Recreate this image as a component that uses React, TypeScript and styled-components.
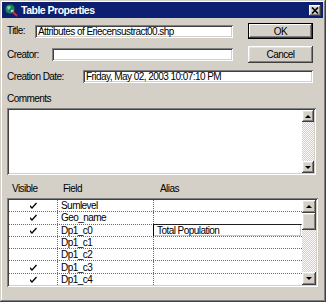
import styled, { createGlobalStyle } from "styled-components";

const GlobalStyle = createGlobalStyle`
  html, body {
    margin: 0;
    padding: 0;
    background: #d4d0c8;
  }
  body {
    font-family: "Liberation Sans", Arial, sans-serif;
    font-size: 10px;
    letter-spacing: -0.55px;
    color: #000;
  }
`;

const raised = `
  box-shadow: inset -1px -1px #404040, inset 1px 1px #ffffff,
    inset -2px -2px #808080, inset 2px 2px #e4e1da;
`;

const sunken = `
  box-shadow: inset 1px 1px #808080, inset -1px -1px #ffffff,
    inset 2px 2px #404040, inset -2px -2px #d4d0c8;
`;

const Window = styled.div`
  width: 326px;
  height: 302px;
  box-sizing: border-box;
  background: #d4d0c8;
  padding: 2px 3px 2px 2px;
  display: flex;
  flex-direction: column;
  box-shadow: inset -1px -1px #404040, inset 1px 1px #d4d0c8,
    inset -2px -2px #808080, inset 2px 2px #ffffff;
`;

const TitleBar = styled.div`
  height: 16px;
  background: #0c1f70;
  display: flex;
  align-items: center;
  padding: 0 2px;
  gap: 3px;
`;

const TitleText = styled.span`
  flex: 1;
  color: #fff;
  font-weight: bold;
  font-size: 10.5px;
  letter-spacing: -0.5px;
  line-height: 16px;
`;

const CloseButton = styled.div`
  width: 12px;
  height: 11px;
  background: #d4d0c8;
  display: flex;
  align-items: center;
  justify-content: center;
  ${raised}
`;

const Body = styled.div`
  flex: 1;
  display: flex;
  flex-direction: column;
  padding: 5px 5px 0 5px;
`;

const TopGrid = styled.div`
  display: grid;
  grid-template-columns: 1fr 65px;
  grid-template-rows: 16px 17px 13px;
  column-gap: 15px;
  row-gap: 7px;
  margin-right: 5px;
`;

const FieldRow = styled.div<{ $span?: boolean }>`
  display: flex;
  align-items: center;
  grid-column: ${(p) => (p.$span ? "1 / 3" : "auto")};
`;

const Label = styled.label<{ $w?: number }>`
  width: ${(p) => (p.$w ? `${p.$w}px` : "auto")};
  flex-shrink: 0;
  line-height: 12px;
`;

const Input = styled.div`
  flex: 1;
  height: 13px;
  background: #fff;
  padding-left: 3px;
  line-height: 13px;
  white-space: nowrap;
  overflow: hidden;
  ${sunken}
`;

const Button = styled.div<{ $default?: boolean }>`
  display: flex;
  align-items: center;
  justify-content: center;
  background: #d4d0c8;
  box-shadow: ${(p) =>
    p.$default
      ? "inset 0 0 0 1px #000, inset -2px -2px #404040, inset 2px 2px #fff, inset -3px -3px #808080"
      : "inset -1px -1px #404040, inset 1px 1px #fff, inset -2px -2px #808080, inset 2px 2px #e4e1da"};
`;

const SectionLabel = styled.div`
  height: 12px;
  line-height: 12px;
  margin-top: 10px;
`;

const CommentsBox = styled.div`
  height: 67px;
  margin-top: 3px;
  margin-right: 2px;
  background: #fff;
  padding: 2px;
  box-sizing: border-box;
  display: flex;
  justify-content: flex-end;
  ${sunken}
`;

const ScrollBar = styled.div<{ $w: number }>`
  width: ${(p) => p.$w}px;
  display: flex;
  flex-direction: column;
  background-color: #eeece8;
  background-image: repeating-conic-gradient(#d4d0c8 0 25%, #fbfaf8 0 50%);
  background-size: 2px 2px;
`;

const ScrollButton = styled.div<{ $h: number }>`
  height: ${(p) => p.$h}px;
  flex-shrink: 0;
  background: #d4d0c8;
  display: flex;
  align-items: center;
  justify-content: center;
  ${raised}
`;

const Track = styled.div`
  flex: 1;
`;

const Arrow = styled.span<{ $up?: boolean }>`
  width: 0;
  height: 0;
  border-left: 3px solid transparent;
  border-right: 3px solid transparent;
  ${(p) =>
    p.$up ? "border-bottom: 3px solid #000;" : "border-top: 3px solid #000;"}
`;

const HeaderRow = styled.div`
  display: grid;
  grid-template-columns: 50px 96px 1fr;
  height: 12px;
  line-height: 12px;
  margin-top: 8px;
`;

const HeaderCell = styled.span<{ $pad: number }>`
  padding-left: ${(p) => p.$pad}px;
`;

const Grid = styled.div`
  height: 89px;
  margin-top: 3px;
  background: #fff;
  padding: 2px;
  box-sizing: border-box;
  display: flex;
  ${sunken}
`;

const Rows = styled.div`
  flex: 1;
  display: flex;
  flex-direction: column;
`;

const Row = styled.div`
  display: grid;
  grid-template-columns: 48px 96px 1fr;
  height: 12.15px;
  flex: 1;
  border-bottom: 1px dotted #6a6a6a;
  &:last-child {
    border-bottom: none;
  }
`;

const CheckCell = styled.div`
  display: flex;
  align-items: center;
  justify-content: center;
`;

const TextCell = styled.div<{ $editing?: boolean }>`
  border-left: 1px dotted #6a6a6a;
  padding-left: 3px;
  display: flex;
  align-items: center;
  white-space: nowrap;
  overflow: hidden;
  ${(p) =>
    p.$editing
      ? `border-left: 1px solid #000;
         margin-top: -1px;
         border-top: 1px solid #202020;
         box-shadow: inset -1px -1px #c8c8c8;
         margin-right: 1px;`
      : ""}
`;

function Check() {
  return (
    <svg width="7" height="7" viewBox="0 0 7 7">
      <polygon points="0,3 2,5 6,0.5 7,1.5 2,7 0,5" fill="#000" />
    </svg>
  );
}

function AppIcon() {
  return (
    <svg width="14" height="14" viewBox="0 0 14 14">
      <circle cx="6" cy="6" r="5" fill="#1e7f6e" stroke="#0b3a30" strokeWidth="1" />
      <path d="M3 4 Q5 2 7 4 Q6 6 4 7 Z" fill="#7fd1a8" />
      <path d="M7 7 Q9 6 10 8 Q8 10 7 9 Z" fill="#9fe0b8" />
      <line x1="9" y1="9" x2="13" y2="13" stroke="#d2284a" strokeWidth="2" />
    </svg>
  );
}

interface FieldRowData {
  visible: boolean;
  name: string;
  alias: string;
  editing?: boolean;
}

const fields: FieldRowData[] = [
  { visible: true, name: "Sumlevel", alias: "" },
  { visible: true, name: "Geo_name", alias: "" },
  { visible: true, name: "Dp1_c0", alias: "Total Population", editing: true },
  { visible: false, name: "Dp1_c1", alias: "" },
  { visible: false, name: "Dp1_c2", alias: "" },
  { visible: true, name: "Dp1_c3", alias: "" },
  { visible: true, name: "Dp1_c4", alias: "" },
];

export default function App() {
  return (
    <>
      <GlobalStyle />
      <Window>
        <TitleBar>
          <AppIcon />
          <TitleText>Table Properties</TitleText>
          <CloseButton>
            <svg width="8" height="7" viewBox="0 0 8 7">
              <path d="M1 0.5 L7 6.5 M7 0.5 L1 6.5" stroke="#000" strokeWidth="1.6" />
            </svg>
          </CloseButton>
        </TitleBar>
        <Body>
          <TopGrid>
            <FieldRow>
              <Label $w={28}>Title:</Label>
              <Input>Attributes of Eriecensustract00.shp</Input>
            </FieldRow>
            <Button $default>OK</Button>
            <FieldRow>
              <Label $w={45}>Creator:</Label>
              <Input />
            </FieldRow>
            <Button>Cancel</Button>
            <FieldRow $span>
              <Label $w={76}>Creation Date:</Label>
              <Input>Friday, May 02, 2003 10:07:10 PM</Input>
            </FieldRow>
          </TopGrid>

          <SectionLabel>Comments</SectionLabel>
          <CommentsBox>
            <ScrollBar $w={12}>
              <ScrollButton $h={12}>
                <Arrow $up />
              </ScrollButton>
              <Track />
              <ScrollButton $h={12}>
                <Arrow />
              </ScrollButton>
            </ScrollBar>
          </CommentsBox>

          <HeaderRow>
            <HeaderCell $pad={5}>Visible</HeaderCell>
            <HeaderCell $pad={6}>Field</HeaderCell>
            <HeaderCell $pad={7}>Alias</HeaderCell>
          </HeaderRow>
          <Grid>
            <Rows>
              {fields.map((f) => (
                <Row key={f.name}>
                  <CheckCell>{f.visible && <Check />}</CheckCell>
                  <TextCell>{f.name}</TextCell>
                  <TextCell $editing={f.editing}>{f.alias}</TextCell>
                </Row>
              ))}
            </Rows>
            <ScrollBar $w={14}>
              <ScrollButton $h={13}>
                <Arrow $up />
              </ScrollButton>
              <ScrollButton $h={17} />
              <Track />
              <ScrollButton $h={13}>
                <Arrow />
              </ScrollButton>
            </ScrollBar>
          </Grid>
        </Body>
      </Window>
    </>
  );
}
